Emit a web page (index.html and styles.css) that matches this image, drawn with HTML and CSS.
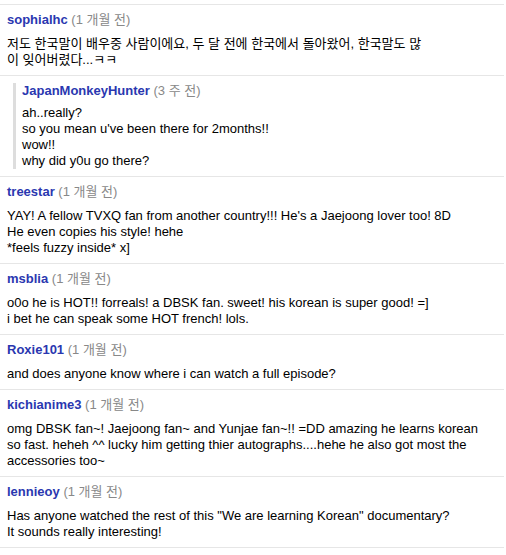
FILE: index.html
```html
<!DOCTYPE html>
<html>
<head>
  <meta charset="UTF-8" />
  <title>Comments</title>
  <link rel="stylesheet" href="styles.css">
</head>
<body>
  <div class="comments">

    <div class="comment">
      <div class="meta"><a class="author" href="#">sophialhc</a> <span class="age">(1 개월 전)</span></div>
      <div class="text">저도 한국말이 배우중 사람이에요, 두 달 전에 한국에서 돌아왔어, 한국말도 많<br>이 잊어버렸다...ㅋㅋ</div>
    </div>

    <!-- reply -->
    <div class="comment">
      <div class="reply">
        <div class="meta"><a class="author" href="#">JapanMonkeyHunter</a> <span class="age">(3 주 전)</span></div>
        <div class="text">ah..really?<br>so you mean u've been there for 2months!!<br>wow!!<br>why did y0u go there?</div>
      </div>
    </div>

    <div class="comment">
      <div class="meta"><a class="author" href="#">treestar</a> <span class="age">(1 개월 전)</span></div>
      <div class="text">YAY! A fellow TVXQ fan from another country!!! He's a Jaejoong lover too! 8D<br>He even copies his style! hehe<br>*feels fuzzy inside* x]</div>
    </div>

    <div class="comment">
      <div class="meta"><a class="author" href="#">msblia</a> <span class="age">(1 개월 전)</span></div>
      <div class="text">o0o he is HOT!! forreals! a DBSK fan. sweet! his korean is super good! =]<br>i bet he can speak some HOT french! lols.</div>
    </div>

    <div class="comment">
      <div class="meta"><a class="author" href="#">Roxie101</a> <span class="age">(1 개월 전)</span></div>
      <div class="text">and does anyone know where i can watch a full episode?</div>
    </div>

    <div class="comment">
      <div class="meta"><a class="author" href="#">kichianime3</a> <span class="age">(1 개월 전)</span></div>
      <div class="text">omg DBSK fan~! Jaejoong fan~ and Yunjae fan~!! =DD amazing he learns korean so fast. heheh ^^ lucky him getting thier autographs....hehe he also got most the accessories too~</div>
    </div>

    <div class="comment">
      <div class="meta"><a class="author" href="#">lennieoy</a> <span class="age">(1 개월 전)</span></div>
      <div class="text">Has anyone watched the rest of this "We are learning Korean" documentary?<br>It sounds really interesting!</div>
    </div>

  </div>
</body>
</html>
```

FILE: styles.css
```css
body {
  margin: 0;
  padding-top: 4px;
  background: #fff;
  font-family: "Liberation Sans", Arial, "Noto Sans CJK KR", sans-serif;
  font-size: 13px;
  line-height: 16px;
  color: #000;
}
.comments {
  width: 504px;
  border-bottom: 1px solid #e6e6e6;
}
.comment {
  border-top: 1px solid #e6e6e6;
  padding: 7px 16px 7px 7px;
}
.meta {
  margin-bottom: 8px;
}
.author {
  color: #2a37b0;
  font-weight: bold;
  text-decoration: none;
}
.age {
  color: #888;
}
.reply {
  margin-left: 6px;
  border-left: 3px solid #ddd;
  padding-left: 6px;
}
.reply .meta {
  margin-bottom: 6px;
}
```
